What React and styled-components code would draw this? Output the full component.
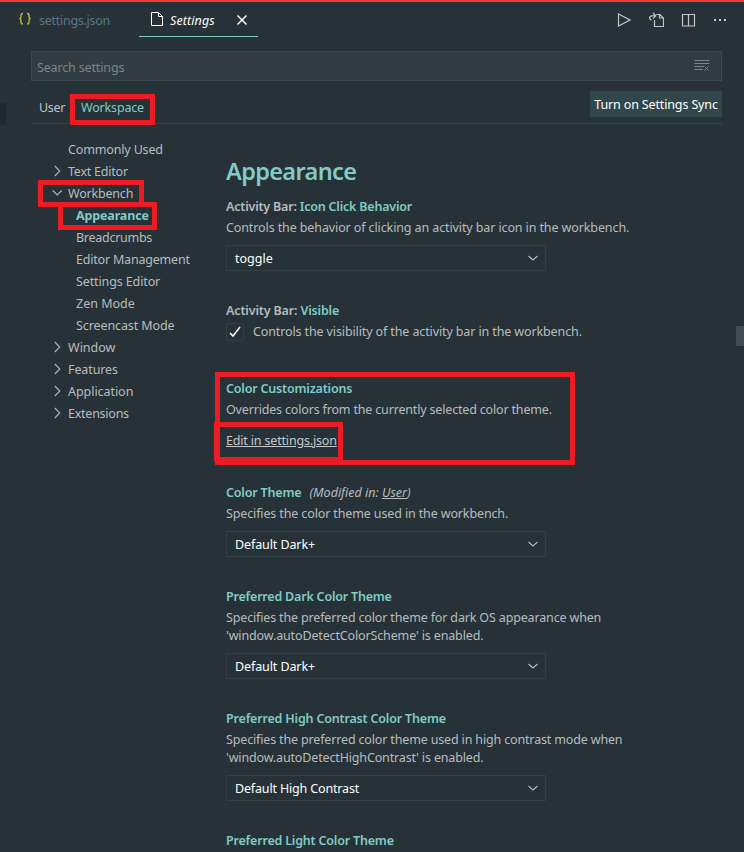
import React from "react";
import styled, { createGlobalStyle, css } from "styled-components";

const Global = createGlobalStyle`
  * { box-sizing: border-box; }
  html, body { margin: 0; background: #263238; }
  body { overflow: hidden; font-family: "Noto Sans", "Open Sans", sans-serif; font-size: 12.5px; color: #b9bcbd; }
  h1, h2, p { margin: 0; font: inherit; }
  button { font: inherit; border: 0; padding: 0; background: none; color: inherit; }
  svg { display: block; flex: none; }
`;

const Window = styled.div`
  position: relative;
  width: 744px;
  height: 852px;
  overflow: hidden;
  background: #263238;
  border-top: 2px solid #f23a35;
`;

const Fit = styled.span`
  white-space: nowrap;
  letter-spacing: ${(p) => p.$ls ?? -0.15}px;
`;

const TabBar = styled.header`
  display: flex;
  height: 35px;
  align-items: stretch;
`;

const Tab = styled.div`
  display: flex;
  align-items: center;
  height: 35px;
  width: ${(p) => p.$width}px;
  padding-left: ${(p) => p.$pad}px;
  color: ${(p) => (p.$active ? "#fff" : "#5a7883")};
  font-style: ${(p) => (p.$active ? "italic" : "normal")};
  border-bottom: 1px solid ${(p) => (p.$active ? "#80cbc4" : "transparent")};
`;

const TabLabel = styled.span`
  flex: 1;
  padding: 2px 0 0 ${(p) => p.$gap}px;
`;

const TabClose = styled.button`
  width: 24px;
  padding-top: 2px;
`;

const Actions = styled.div`
  display: flex;
  align-items: center;
  gap: 16px;
  margin-left: auto;
  padding: 1px 16px 0 0;
  color: #c5c5c5;
`;

const Header = styled.section`
  display: flex;
  flex-direction: column;
  width: 691px;
  margin: 14px 0 0 31px;
`;

const Search = styled.div`
  display: flex;
  align-items: center;
  justify-content: space-between;
  height: 30px;
  padding: 2px 11px 0 5px;
  border: 1px solid #3b484e;
  background: #303c41;
  color: #7c8589;
`;

const ScopeRow = styled.nav`
  display: flex;
  height: 43px;
  align-items: flex-start;
  border-bottom: 1px solid #3a4447;
`;

const Scope = styled.button`
  height: 22px;
  margin-top: 15px;
  padding-left: ${(p) => p.$left}px;
  width: ${(p) => p.$width}px;
  text-align: left;
  color: ${(p) => (p.$active ? "#80cbc4" : "#c0c3c4")};
`;

const SyncButton = styled.button`
  width: 132px;
  height: 26px;
  margin: 10px 0 0 auto;
  background: #32474b;
  color: #fff;
`;

const Body = styled.main`
  display: flex;
`;

const Tree = styled.nav`
  width: 226px;
  padding: 14px 0 0 52px;
`;

const TreeRow = styled.div`
  display: flex;
  align-items: center;
  height: 22px;
  padding-left: ${(p) => (p.$nested ? 8 : 0)}px;
  ${(p) => p.$active && css`color: #80cbc4; font-weight: 700;`}
`;

const Twistie = styled.span`
  width: 16px;
  height: 16px;
  color: #b3b8ba;
  flex: none;
`;

const Content = styled.section`
  width: 450px;
  padding-top: 26px;
`;

const Title = styled.h1`
  height: 46px;
  line-height: 43px;
  font-size: 23.5px;
  font-weight: 600;
  color: #80cbc4;
`;

const Setting = styled.article`
  height: ${(p) => p.$height}px;
`;

const Name = styled.h2`
  display: flex;
  height: 23px;
  line-height: 22px;
  font-weight: 600;
`;

const Key = styled.span`
  color: #80cbc4;
`;

const Scoped = styled.em`
  margin-left: 8px;
  font-weight: 400;
`;

const Description = styled.p`
  line-height: 18px;
  height: ${(p) => (p.$lines || 1) * 18}px;
`;

const Select = styled.button`
  display: flex;
  align-items: center;
  justify-content: space-between;
  width: 320px;
  height: 26px;
  margin-top: 8px;
  padding: 0 4px 0 8px;
  border: 1px solid #343f45;
  color: #fff;
  text-align: left;
`;

const SelectArrow = styled.span`
  color: #b9bcbd;
`;

const CheckRow = styled.label`
  display: flex;
  height: 18px;
  line-height: 18px;
  gap: 9px;
`;

const CheckBox = styled.span`
  width: 18px;
  height: 18px;
  border: 1px solid #343f45;
  border-radius: 3px;
  color: #fff;
`;

const EditLink = styled.a`
  display: block;
  margin-top: 13px;
  line-height: 18px;
  color: #c5c8c9;
  text-decoration: underline;
  text-underline-offset: 1px;
`;

const Callout = styled.div`
  position: absolute;
  left: ${(p) => p.$x}px;
  top: ${(p) => p.$y - 2}px;
  width: ${(p) => p.$w}px;
  height: ${(p) => p.$h}px;
  border: 5px solid #ed1c24;
  border-left-width: ${(p) => p.$left || 5}px;
  pointer-events: none;
`;

const ScrollThumb = styled.div`
  position: absolute;
  right: 0;
  top: 324px;
  width: 8px;
  height: 20px;
  background: #434e54;
`;

const EdgeMark = styled.div`
  position: absolute;
  left: 0;
  top: 101px;
  width: 6px;
  height: 22px;
  background: #20292f;
`;

const Icon = ({ w = 16, h = w, d, fill, sw = 1 }) => (
  <svg width={w} height={h} viewBox={`0 0 ${w} ${h}`} fill={fill || "none"} stroke={fill ? "none" : "currentColor"} strokeWidth={sw}>
    <path d={d} />
  </svg>
);

const Chevron = ({ open }) => <Icon d={open ? "M0.7 5.500 L5.200 10 L9.700 5.500" : "M2.800 3 L7.800 8 L2.800 13"} sw={1.1} />;

const Dropdown = ({ children, ls }) => (
  <Select>
    <Fit $ls={ls}>{children}</Fit>
    <SelectArrow><Icon d="M3.500 6 L8 10 L12.500 6" sw={1.1} /></SelectArrow>
  </Select>
);

const tree = [
  { label: "Commonly Used", ls: -0.15 },
  { label: "Text Editor", arrow: "closed", ls: -0.23 },
  { label: "Workbench", arrow: "open", ls: -0.2 },
  { label: "Appearance", nested: true, active: true, ls: -0.15 },
  { label: "Breadcrumbs", nested: true, ls: -0.27 },
  { label: "Editor Management", nested: true, ls: -0.2 },
  { label: "Settings Editor", nested: true, ls: -0.12 },
  { label: "Zen Mode", nested: true, ls: 0 },
  { label: "Screencast Mode", nested: true, ls: -0.1 },
  { label: "Window", arrow: "closed", ls: 0 },
  { label: "Features", arrow: "closed", ls: -0.1 },
  { label: "Application", arrow: "closed", ls: -0.05 },
  { label: "Extensions", arrow: "closed", ls: -0.25 },
];

export default function App() {
  return (
    <Window>
      <Global />
      <TabBar>
        <Tab $width={139} $pad={17}>
          <svg width="16" height="16" viewBox="0 0 16 16" fill="none" stroke="#cbbd2b" strokeWidth="1.3">
            <path d="M6 2.500H5.500Q4 2.500 4 4V6Q4 7.700 2.300 7.700Q4 7.700 4 9.500V11.500Q4 13 5.500 13H6M10 2.500H10.500Q12 2.500 12 4V6Q12 7.700 13.700 7.700Q12 7.700 12 9.500V11.500Q12 13 10.500 13H10" />
          </svg>
          <TabLabel $gap={6}><Fit $ls={-0.27}>settings.json</Fit></TabLabel>
        </Tab>
        <Tab $active $width={119} $pad={10}>
          <Icon d="M2.500 1.500H9.500L13.500 5.500V14.500H2.500ZM9.500 1.500V5.500H13.500" />
          <TabLabel $gap={5}><Fit $ls={0.1}>Settings</Fit></TabLabel>
          <TabClose><Icon d="M3.500 3.500L12.500 12.500M12.500 3.500L3.500 12.500" sw={1.5} /></TabClose>
        </Tab>
        <Actions>
          <Icon d="M2.500 2V14L14 8Z" sw={1.2} />
          <Icon d="M6.500 8V14.500H15.500V6L12 2.500H8.500M11.500 2.500V6H15.500M5 1L7.800 3.800L5 6.600M7.800 3.800H4Q1.600 3.800 1.600 6Q1.600 7.800 3.800 8" sw={1.2} />
          <Icon d="M2.500 2.500H14.500V14H2.500ZM8.500 2.500V14" sw={1.2} />
          <Icon fill="currentColor" d="M2 7H4V9H2ZM7 7H9V9H7ZM12 7H14V9H12Z" />
        </Actions>
      </TabBar>
      <Header>
        <Search>
          <Fit>Search settings</Fit>
          <Icon d="M0.500 1.500H15.500M0.500 4.500H15.500M0.500 7.500H10M0.500 10.500H9M10.500 7.500L14.500 11.500M14.500 7.500L10.500 11.500" />
        </Search>
        <ScopeRow>
          <Scope $left={8} $width={50}><Fit $ls={-0.3}>User</Fit></Scope>
          <Scope $active $left={0} $width={70}><Fit $ls={-0.17}>Workspace</Fit></Scope>
          <SyncButton><Fit $ls={-0.14}>Turn on Settings Sync</Fit></SyncButton>
        </ScopeRow>
      </Header>
      <Body>
        <Tree>
          {tree.map((row) => (
            <TreeRow key={row.label} $nested={row.nested} $active={row.active}>
              <Twistie>{row.arrow && <Chevron open={row.arrow === "open"} />}</Twistie>
              <Fit $ls={row.ls}>{row.label}</Fit>
            </TreeRow>
          ))}
        </Tree>
        <Content>
          <Title><Fit $ls={-0.65}>Appearance</Fit></Title>
          <Setting $height={104}>
            <Name><Fit $ls={-0.2}>Activity Bar:&nbsp;<Key>Icon Click Behavior</Key></Fit></Name>
            <Description><Fit $ls={-0.11}>Controls the behavior of clicking an activity bar icon in the workbench.</Fit></Description>
            <Dropdown ls={0}>toggle</Dropdown>
          </Setting>
          <Setting $height={78}>
            <Name><Fit $ls={-0.15}>Activity Bar:&nbsp;<Key>Visible</Key></Fit></Name>
            <CheckRow>
              <CheckBox><Icon d="M3 9L6 12L13 3" sw={1.5} /></CheckBox>
              <Fit $ls={-0.12}>Controls the visibility of the activity bar in the workbench.</Fit>
            </CheckRow>
          </Setting>
          <Setting $height={104}>
            <Name><Key><Fit $ls={-0.18}>Color Customizations</Fit></Key></Name>
            <Description><Fit $ls={-0.17}>Overrides colors from the currently selected color theme.</Fit></Description>
            <EditLink><Fit $ls={-0.17}>Edit in settings.json</Fit></EditLink>
          </Setting>
          <Setting $height={104}>
            <Name><Key><Fit $ls={-0.17}>Color Theme</Fit></Key><Scoped><Fit $ls={0}>(Modified in: <u>User</u>)</Fit></Scoped></Name>
            <Description><Fit $ls={-0.13}>Specifies the color theme used in the workbench.</Fit></Description>
            <Dropdown ls={-0.1}>Default Dark+</Dropdown>
          </Setting>
          <Setting $height={122}>
            <Name><Key><Fit $ls={-0.2}>Preferred Dark Color Theme</Fit></Key></Name>
            <Description $lines={2}>
              <Fit $ls={-0.155}>Specifies the preferred color theme for dark OS appearance when</Fit><br />
              <Fit $ls={-0.14}>'window.autoDetectColorScheme' is enabled.</Fit>
            </Description>
            <Dropdown ls={-0.1}>Default Dark+</Dropdown>
          </Setting>
          <Setting $height={122}>
            <Name><Key><Fit $ls={-0.18}>Preferred High Contrast Color Theme</Fit></Key></Name>
            <Description $lines={2}>
              <Fit $ls={-0.155}>Specifies the preferred color theme used in high contrast mode when</Fit><br />
              <Fit $ls={-0.15}>'window.autoDetectHighContrast' is enabled.</Fit>
            </Description>
            <Dropdown ls={-0.16}>Default High Contrast</Dropdown>
          </Setting>
          <Setting $height={30}>
            <Name><Key><Fit $ls={-0.19}>Preferred Light Color Theme</Fit></Key></Name>
          </Setting>
        </Content>
      </Body>
      <EdgeMark />
      <ScrollThumb />
      <Callout $x={70} $y={94} $w={85} $h={31} />
      <Callout $x={38} $y={180} $w={106} $h={27} />
      <Callout $x={58} $y={202} $w={99} $h={28} />
      <Callout $x={215} $y={372} $w={360} $h={93} />
      <Callout $x={214} $y={422} $w={129} $h={40} $left={6} />
    </Window>
  );
}
